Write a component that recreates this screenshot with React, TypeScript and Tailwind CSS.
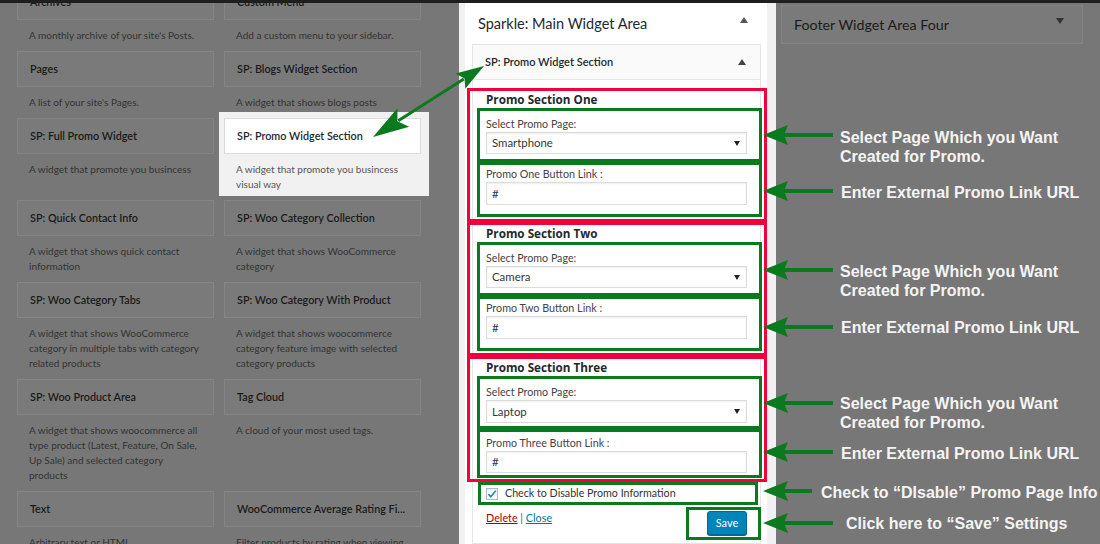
import React from 'react';

const G = '#0b7a1e';

type Item = { t: string; d: string[]; hl?: boolean };

const rows: Item[][] = [
  [
    { t: 'Archives', d: ["A monthly archive of your site's Posts."] },
    { t: 'Custom Menu', d: ['Add a custom menu to your sidebar.'] },
  ],
  [
    { t: 'Pages', d: ["A list of your site's Pages."] },
    { t: 'SP: Blogs Widget Section', d: ['A widget that shows blogs posts'] },
  ],
  [
    { t: 'SP: Full Promo Widget', d: ['A widget that promote you busincess'] },
    { t: 'SP: Promo Widget Section', d: ['A widget that promote you busincess', 'visual way'], hl: true },
  ],
  [
    { t: 'SP: Quick Contact Info', d: ['A widget that shows quick contact', 'information'] },
    { t: 'SP: Woo Category Collection', d: ['A widget that shows WooCommerce', 'category'] },
  ],
  [
    { t: 'SP: Woo Category Tabs', d: ['A widget that shows WooCommerce', 'category in multiple tabs with category', 'related products'] },
    { t: 'SP: Woo Category With Product', d: ['A widget that shows woocommerce', 'category feature image with selected', 'category products'] },
  ],
  [
    { t: 'SP: Woo Product Area', d: ['A widget that shows woocommerce all', 'type product (Latest, Feature, On Sale,', 'Up Sale) and selected category', 'products'] },
    { t: 'Tag Cloud', d: ['A cloud of your most used tags.'] },
  ],
  [
    { t: 'Text', d: ['Arbitrary text or HTML'] },
    { t: 'WooCommerce Average Rating Fi...', d: ['Filter products by rating when viewing'] },
  ],
];

function WidgetItem({ it }: { it: Item }) {
  const lines = it.d.map((l, i) => <div key={i}>{l}</div>);
  if (it.hl) {
    return (
      <div className="-ml-[5px] -mr-[8px] -mt-[6px] mb-[4px] pl-[5px] pr-[8px] pt-[6px] bg-[#f1f1f1]">
        <div className="h-[36px] border border-[#dcdcdc] bg-white pl-[12px] flex items-center text-[10.8px] font-semibold text-[#23282d] whitespace-nowrap">
          {it.t}
        </div>
        <div className="pt-[8px] pb-[4px] pl-[12px] text-[10px] leading-[15px] whitespace-nowrap text-[#555]">{lines}</div>
      </div>
    );
  }
  return (
    <div>
      <div className="h-[36px] border border-[#848484] bg-[#7a7a7a] pl-[12px] flex items-center text-[10.8px] font-semibold text-[#1a1a1a] whitespace-nowrap">
        {it.t}
      </div>
      <div className="pt-[8px] pb-[8px] pl-[12px] text-[10px] leading-[15px] whitespace-nowrap text-[#333]">{lines}</div>
    </div>
  );
}

function TriUp({ color = '#555' }: { color?: string }) {
  return (
    <svg width="8" height="6" viewBox="0 0 8 6">
      <polygon points="4,0 8,6 0,6" fill={color} />
    </svg>
  );
}
function TriDown({ color = '#333', w = 8, h = 6 }: { color?: string; w?: number; h?: number }) {
  return (
    <svg width={w} height={h} viewBox={`0 0 ${w} ${h}`}>
      <polygon points={`0,0 ${w},0 ${w / 2},${h}`} fill={color} />
    </svg>
  );
}

type Sec = {
  title: string;
  page: string;
  link: string;
  aPt: string;
  aPb: string;
  selH: string;
  bPt: string;
  bPb: string;
  inH: string;
  mb: string;
};

const sections: Sec[] = [
  { title: 'Promo Section One', page: 'Smartphone', link: 'Promo One Button Link :', aPt: 'pt-[5px]', aPb: 'pb-[5px]', selH: 'h-[22px]', bPt: 'pt-[1px]', bPb: 'pb-[9px]', inH: 'h-[23px]', mb: 'mb-[2px]' },
  { title: 'Promo Section Two', page: 'Camera', link: 'Promo Two Button Link :', aPt: 'pt-[5px]', aPb: 'pb-[5px]', selH: 'h-[22px]', bPt: 'pt-[1px]', bPb: 'pb-[9px]', inH: 'h-[23px]', mb: 'mb-[2px]' },
  { title: 'Promo Section Three', page: 'Laptop', link: 'Promo Three Button Link :', aPt: 'pt-[5px]', aPb: 'pb-[3px]', selH: 'h-[23px]', bPt: 'pt-[3px]', bPb: 'pb-[2px]', inH: 'h-[22px]', mb: 'mb-[1px]' },
];

function Section({ s }: { s: Sec }) {
  return (
    <div className="w-[300px] -ml-[6px] border-[3px] border-[#f2003c]">
      <div className="h-[17px] pl-[16px] font-['Open_Sans',sans-serif] text-[11.7px] font-bold leading-[17px] text-[#23282d]">{s.title}</div>
      <div className={`ml-[7px] w-[285px] border-[3px] border-[#0b7a1e] pl-[6px] ${s.aPt} ${s.aPb}`}>
        <div className="text-[10.7px] leading-[16px] text-[#444]">Select Promo Page:</div>
        <div className={`w-[261px] ${s.selH} border border-[#dcdcdc] shadow-[inset_0_1px_2px_rgba(0,0,0,0.07)] flex items-center justify-between pl-[5px] pr-[6px] text-[11.4px] text-[#32373c]`}>
          <span>{s.page}</span>
          <TriDown color="#222" w={6} h={5} />
        </div>
      </div>
      <div className={`ml-[7px] w-[285px] border-[3px] border-[#0b7a1e] pl-[6px] ${s.bPt} ${s.bPb} ${s.mb}`}>
        <div className="text-[10.75px] leading-[16px] text-[#4a404a]">{s.link}</div>
        <div className={`w-[261px] ${s.inH} border border-[#dcdcdc] shadow-[inset_0_1px_2px_rgba(0,0,0,0.07)] flex items-center pl-[5px] text-[11.5px] text-[#32373c]`}>
          #
        </div>
      </div>
    </div>
  );
}

function head(tx: number, ty: number, ux: number, uy: number, L: number, W: number, notch: number) {
  const nx = -uy;
  const ny = ux;
  const c1 = [tx + L * ux + W * nx, ty + L * uy + W * ny];
  const c2 = [tx + L * ux - W * nx, ty + L * uy - W * ny];
  const m = [tx + (L - notch) * ux, ty + (L - notch) * uy];
  return `${tx},${ty} ${c1[0]},${c1[1]} ${m[0]},${m[1]} ${c2[0]},${c2[1]}`;
}

function Arrows() {
  const hs = [
    { y: 135, end: 833 },
    { y: 191, end: 833 },
    { y: 270, end: 833 },
    { y: 327, end: 833 },
    { y: 403, end: 833 },
    { y: 452, end: 833 },
    { y: 491, end: 812 },
    { y: 523, end: 833 },
  ];
  const p1 = [373, 137];
  const p2 = [484, 66];
  const dx = p2[0] - p1[0];
  const dy = p2[1] - p1[1];
  const len = Math.hypot(dx, dy);
  const ux = dx / len;
  const uy = dy / len;
  return (
    <svg className="absolute left-0 top-0 pointer-events-none" width="1100" height="544" viewBox="0 0 1100 544">
      {hs.map((h) => (
        <g key={h.y}>
          <line x1={782} y1={h.y} x2={h.end} y2={h.y} stroke={G} strokeWidth={4} />
          <polygon points={head(763, h.y, 1, 0, 25, 10, 4)} fill={G} />
        </g>
      ))}
      <line x1={p1[0] + 30 * ux} y1={p1[1] + 30 * uy} x2={p2[0] - 24 * ux} y2={p2[1] - 24 * uy} stroke={G} strokeWidth={3} />
      <polygon points={head(p1[0], p1[1], ux, uy, 36, 11, 7)} fill={G} />
      <polygon points={head(p2[0], p2[1], -ux, -uy, 28, 9, 5)} fill={G} />
    </svg>
  );
}

function Note({ lines, ml, mt }: { lines: string[]; ml: string; mt: string }) {
  return (
    <div className={`${ml} ${mt} font-['Liberation_Sans',Arial,sans-serif] font-bold text-[16px] leading-[19px] text-[#f4f4f4] whitespace-nowrap`}>
      {lines.map((l, i) => (
        <div key={i}>{l}</div>
      ))}
    </div>
  );
}

export default function App() {
  return (
    <div className="relative w-[1100px] h-[544px] overflow-hidden bg-[#777] font-['Lato','Open_Sans',sans-serif]">
      <div className="h-[3px] bg-[#1e1e1e]" />
      <div className="flex h-[541px]">
        {/* Left: available widgets */}
        <div className="w-[459px] shrink-0 overflow-hidden">
          <div className="grid grid-cols-[197px_197px] gap-x-[10px] pl-[17px] -mt-[19px] items-start content-start">
            {rows.map((r, i) => (
              <React.Fragment key={i}>
                <WidgetItem it={r[0]} />
                <WidgetItem it={r[1]} />
              </React.Fragment>
            ))}
          </div>
        </div>

        {/* Center: sidebar panel */}
        <div className="w-[317px] shrink-0 bg-[#f1f1f1] pl-[6px] pr-[9px]">
          <div className="h-full bg-white flex flex-col">
            <div className="h-[41px] shrink-0 flex items-center justify-between pl-[13px] pr-[19px]">
              <span className="text-[14.5px] text-[#23282d]">Sparkle: Main Widget Area</span>
              <span className="-mt-[7px]">
                <TriUp color="#555" />
              </span>
            </div>
            <div className="ml-[7px] w-[289px] border border-[#e5e5e5] flex-1">
              <div className="h-[35px] bg-[#fafafa] border-b border-[#e5e5e5] flex items-center justify-between pl-[12px] pr-[14px]">
                <span className="text-[11px] font-semibold text-[#23282d]">SP: Promo Widget Section</span>
                <TriUp color="#444" />
              </div>
              <div className="pt-[8px]">
                {sections.map((s) => (
                  <Section key={s.title} s={s} />
                ))}
                <div className="ml-[5px] w-[280px] h-[23px] border-[3px] border-[#0b7a1e] flex items-center pl-[5px]">
                  <div className="w-[12px] h-[12px] border border-[#b4b9be] bg-white shadow-[inset_0_1px_2px_rgba(0,0,0,0.1)] flex items-center justify-center">
                    <svg width="11" height="10" viewBox="0 0 11 10">
                      <path d="M1.5 5.2 L4.2 8 L9.6 1.5" stroke="#1e8cbe" strokeWidth="1.8" fill="none" />
                    </svg>
                  </div>
                  <span className="ml-[7px] text-[10.7px] text-[#333]">Check to Disable Promo Information</span>
                </div>
                <div className="flex justify-between items-start mt-[2px] pl-[13px]">
                  <div className="pt-[3px] text-[10.8px] leading-[16px]">
                    <span className="text-[#a00] underline">Delete</span>
                    <span className="text-[#555]"> | </span>
                    <span className="text-[#0073aa] underline">Close</span>
                  </div>
                  <div className="w-[75px] h-[33px] border-[3px] border-[#0b7a1e] -mr-[1px] pl-[18px] pt-[1px]">
                    <div className="w-[40px] h-[24px] bg-[#0085ba] border border-[#006799] rounded-[3px] shadow-[0_1px_0_#006799] text-white text-[11px] flex items-center justify-center">
                      Save
                    </div>
                  </div>
                </div>
              </div>
            </div>
          </div>
        </div>

        {/* Right: other sidebar + notes */}
        <div className="flex-1 flex flex-col">
          <div className="ml-[5px] mt-[2px] w-[302px] h-[39px] border border-[#838383] bg-[#7a7a7a] flex items-center justify-between pl-[12px] pr-[18px]">
            <span className="text-[14.25px] text-[#1a1a1a]">Footer Widget Area Four</span>
            <span className="-mt-[7px]">
              <TriDown color="#333" />
            </span>
          </div>
          <Note ml="ml-[64px]" mt="mt-[84px]" lines={['Select Page Which you Want', 'Created for Promo.']} />
          <Note ml="ml-[65px]" mt="mt-[17px]" lines={['Enter External Promo Link URL']} />
          <Note ml="ml-[64px]" mt="mt-[60px]" lines={['Select Page Which you Want', 'Created for Promo.']} />
          <Note ml="ml-[65px]" mt="mt-[18px]" lines={['Enter External Promo Link URL']} />
          <Note ml="ml-[64px]" mt="mt-[57px]" lines={['Select Page Which you Want', 'Created for Promo.']} />
          <Note ml="ml-[65px]" mt="mt-[12px]" lines={['Enter External Promo Link URL']} />
          <Note ml="ml-[45px]" mt="mt-[20px]" lines={['Check to \u201CDIsable\u201D Promo Page Info']} />
          <Note ml="ml-[70px]" mt="mt-[12px]" lines={['Click here to \u201CSave\u201D Settings']} />
        </div>
      </div>
      <Arrows />
    </div>
  );
}
